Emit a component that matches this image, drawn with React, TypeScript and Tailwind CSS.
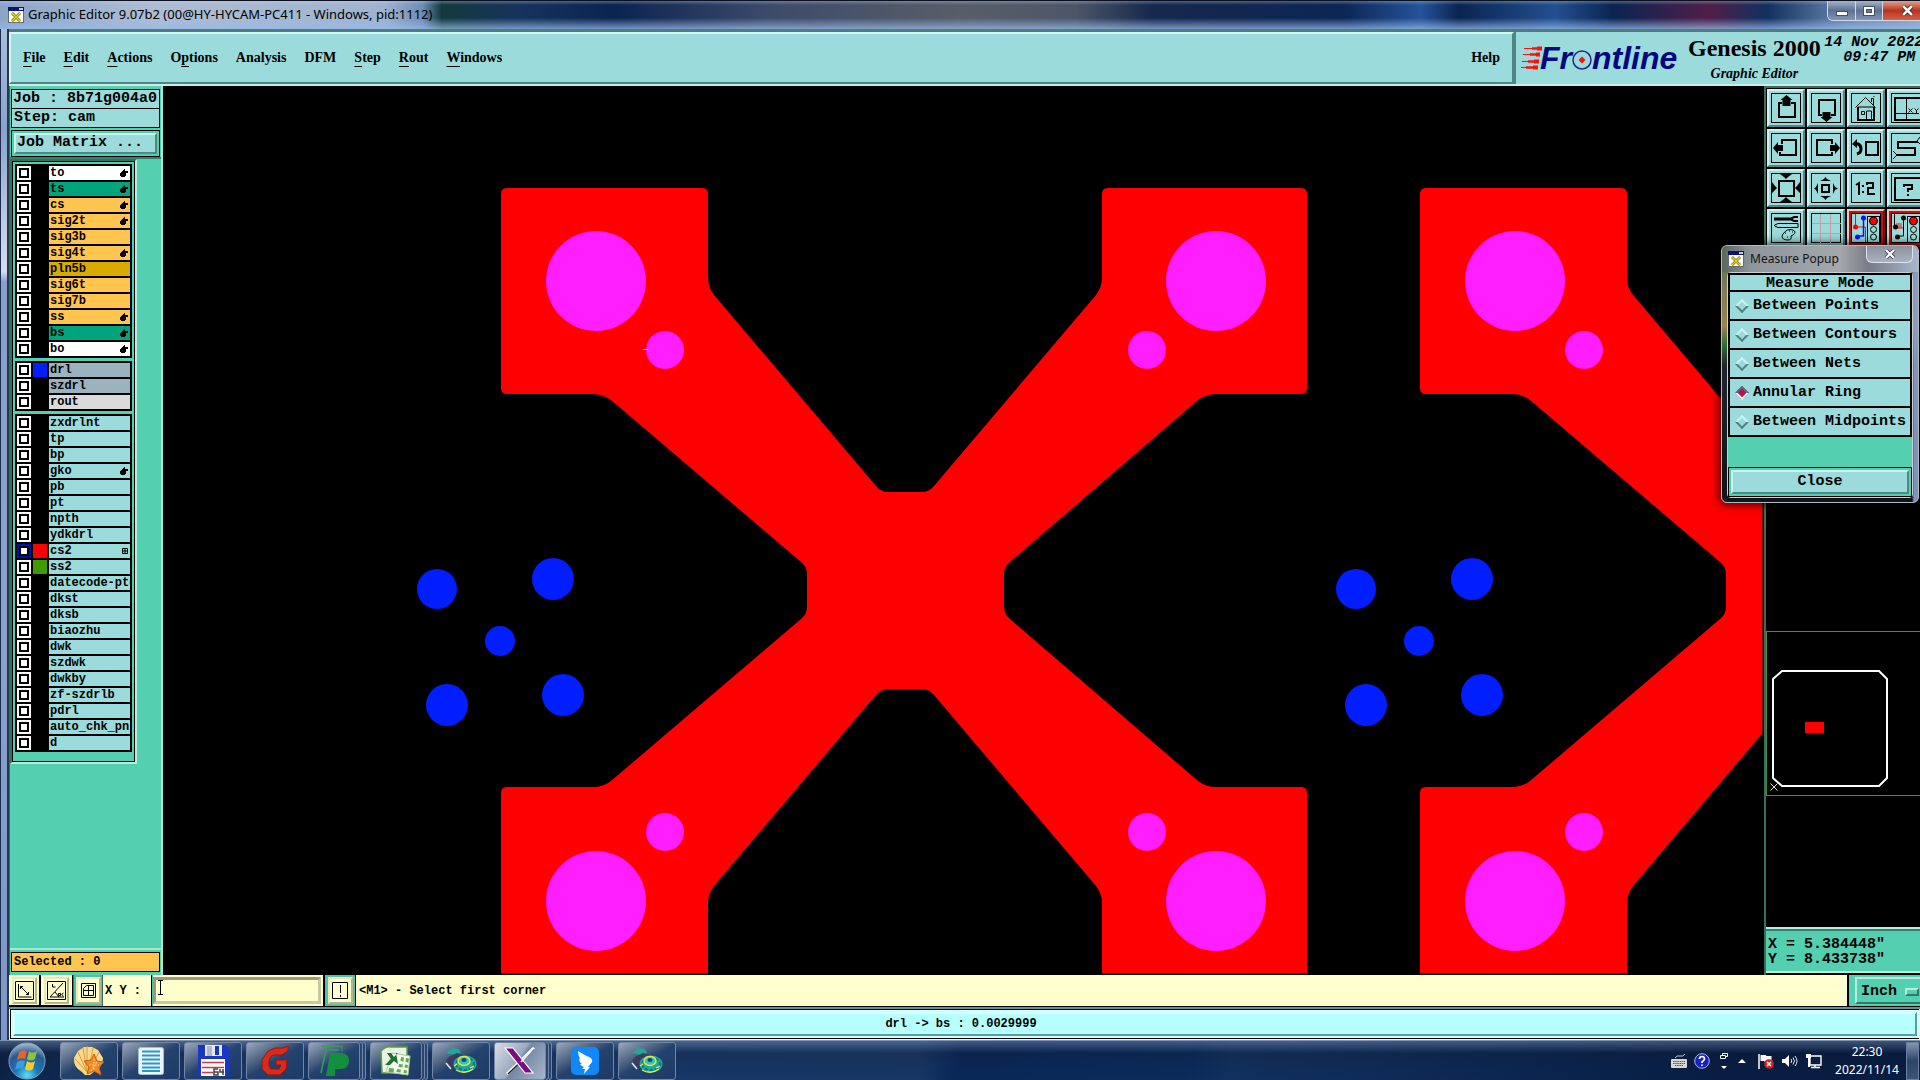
import React from "react";

const MONO = "font-['Liberation_Mono',monospace]";
const SERIF = "font-['Liberation_Serif',serif]";
const UI = "font-['Noto_Sans',sans-serif]";

/* ---------- Title bar ---------- */

function XLogo() {
  return (
    <svg viewBox="0 0 16 16" className="h-4 w-4 shrink-0" aria-hidden="true">
      <rect width="16" height="16" fill="#fff" />
      <rect x="0.5" y="0.5" width="15" height="15" fill="none" stroke="#6a6a70" />
      <rect width="16" height="4" fill="#10107a" />
      <rect x="11" y="1" width="4" height="2" fill="#c8c8c8" />
      <path d="M4 6l8 8M12 6l-8 8" stroke="#6b6410" strokeWidth="2.600" />
      <path d="M4 6l8 8M12 6l-8 8" stroke="#ddd21a" strokeWidth="1.600" />
    </svg>
  );
}

function TitleBar() {
  return (
    <header className="flex h-[29px] shrink-0 items-center overflow-hidden border-t border-[#0a1020] bg-[linear-gradient(to_bottom,rgba(190,210,235,0.35)_0,rgba(150,180,220,0)_4px,rgba(150,180,220,0)_17px,rgba(150,185,235,0.75)_28px),linear-gradient(to_right,#8ba4c6_0,#aebdd2_8%,#9fb3cf_20%,#6e8cb5_22%,#123a3e_23%,#17335c_27%,#0a2450_32%,#3d4a6a_40%,#585e68_50%,#4d5668_56%,#16284c_60%,#0c2656_70%,#25549a_74%,#0a2452_76%,#235090_81%,#0a2452_84%,#501f48_89%,#12305f_92%,#6683ad_96%,#8ba4c6_100%)] pl-2">
      <XLogo />
      <h1 className={`ml-1 whitespace-nowrap text-[13px] text-black ${UI}`}>
        Graphic Editor 9.07b2 (00@HY-HYCAM-PC411 - Windows, pid:1112)
      </h1>
      <div className="ml-auto flex h-5 w-[93px] self-start overflow-hidden rounded-bl-md border-b border-l border-[#d0d8e6]">
        <button aria-label="Minimize" className="flex w-7 shrink-0 items-center justify-center border-r border-[#d0d8e6] bg-gradient-to-b from-[#a5b3c9] via-[#5e7193] to-[#8196b6]">
          <svg viewBox="0 0 12 10" className="h-[10px] w-3"><rect x="0.5" y="5.5" width="11" height="4" fill="#fff" stroke="#44506a" /></svg>
        </button>
        <button aria-label="Maximize" className="flex w-[27px] shrink-0 items-center justify-center border-r border-[#d0d8e6] bg-gradient-to-b from-[#a5b3c9] via-[#5e7193] to-[#8196b6]">
          <svg viewBox="0 0 12 10" className="h-[10px] w-3"><rect x="0.5" y="0.5" width="11" height="9" fill="#fff" stroke="#44506a" /><rect x="3.5" y="3.5" width="5" height="3" fill="#6c7f9f" stroke="#44506a" /></svg>
        </button>
        <button aria-label="Close window" className="flex w-12 shrink-0 items-center justify-center bg-gradient-to-b from-[#e0a090] via-[#b8321c] to-[#d0604a]">
          <svg viewBox="0 0 12 10" className="h-[11px] w-[13px]"><path d="M2 1l8 8M10 1l-8 8" stroke="#54282a" strokeWidth="4" /><path d="M2 1l8 8M10 1l-8 8" stroke="#fff" strokeWidth="2.4" /></svg>
        </button>
      </div>
    </header>
  );
}

/* ---------- Menu bar ---------- */

const MENUS: [string, string, string][] = [
  ["", "F", "ile"],
  ["", "E", "dit"],
  ["", "A", "ctions"],
  ["O", "p", "tions"],
  ["Analysis", "", ""],
  ["DFM", "", ""],
  ["", "S", "tep"],
  ["", "R", "out"],
  ["", "W", "indows"],
];

function FrontlineLogo() {
  return (
    <div className="flex items-center font-['Liberation_Sans',sans-serif] text-[32px] font-bold italic leading-[34px] text-[#06067e]" aria-label="Frontline">
      <svg viewBox="0 0 24 26" className="-mr-1 h-[26px] w-6" aria-hidden="true">
        <g stroke="#ff1010">
          <path d="M4 3.500h12M3 9.500h10M2 16.500h10M1 22.500h10" strokeWidth="1" />
          <path d="M12 3.500h10M10 9.500h10M8 16.500h11M6 22.500h12" strokeWidth="2.500" />
          <path d="M17 3.500h5M16 9.500h4M14 16.500h5M13 22.500h5" strokeWidth="4" />
        </g>
      </svg>
      <span>Fr</span>
      <svg viewBox="0 0 20 20" className="mt-1 h-5 w-5" aria-hidden="true">
        <circle cx="10" cy="10" r="9" fill="none" stroke="#1c2c8c" strokeWidth="1.500" />
        <path d="M10 6.500l3.500 3.500-3.500 3.500L6.500 10z" fill="#ff1010" />
      </svg>
      <span>ntline</span>
    </div>
  );
}

function MenuBar() {
  return (
    <div className={`flex h-[57px] shrink-0 overflow-hidden border-b-2 border-t-[3px] border-b-[#c4efec] border-t-[#4e7d7d] bg-[#9bdbdb] font-bold text-black ${SERIF}`}>
      <nav className="flex flex-1 items-center gap-[18px] border-2 border-b-[#4e8585] border-l-[#d4f6f4] border-r-[#4e8585] border-t-[#d4f6f4] px-3 text-[14px] leading-5">
        {MENUS.map(([pre, key, post]) => (
          <button key={pre + key + post} className="whitespace-nowrap">
            {pre}
            {key && <span className="underline decoration-1 underline-offset-4">{key}</span>}
            {post}
          </button>
        ))}
        <button className="ml-auto">Help</button>
      </nav>
      <div className="flex w-[406px] shrink-0 items-center border-l-2 border-[#4e8585] pl-1">
        <FrontlineLogo />
        <div className="ml-2 flex w-[138px] shrink-0 flex-col items-center">
          <span className="whitespace-nowrap text-[24px] leading-7">Genesis 2000</span>
          <span className="mt-1 text-[14px] italic leading-4">Graphic Editor</span>
        </div>
        <div className={`flex w-[100px] shrink-0 flex-col items-end self-start pt-[3px] text-[15px] italic leading-[15px] ${MONO}`}>
          <span className="whitespace-nowrap">14 Nov 2022</span>
          <span className="mr-2">09:47 PM</span>
        </div>
      </div>
    </div>
  );
}

/* ---------- Layer list ---------- */

type Layer = { name: string; bg?: string; hand?: boolean; swatch?: string; active?: boolean };

const W = "bg-white";
const G = "bg-[#00a47d]";
const O = "bg-[#ffc54e]";
const D = "bg-[#9bb3be]";

const GROUPS: Layer[][] = [
  [
    { name: "to", bg: W, hand: true },
    { name: "ts", bg: G, hand: true },
    { name: "cs", bg: O, hand: true },
    { name: "sig2t", bg: O, hand: true },
    { name: "sig3b", bg: O },
    { name: "sig4t", bg: O, hand: true },
    { name: "pln5b", bg: "bg-[#d9ab00]" },
    { name: "sig6t", bg: O },
    { name: "sig7b", bg: O },
    { name: "ss", bg: O, hand: true },
    { name: "bs", bg: G, hand: true },
    { name: "bo", bg: W, hand: true },
  ],
  [
    { name: "drl", bg: D, swatch: "bg-[#001eff]" },
    { name: "szdrl", bg: D },
    { name: "rout", bg: "bg-[#dadada]" },
  ],
  [
    { name: "zxdrlnt" },
    { name: "tp" },
    { name: "bp" },
    { name: "gko", hand: true },
    { name: "pb" },
    { name: "pt" },
    { name: "npth" },
    { name: "ydkdrl" },
    { name: "cs2", swatch: "bg-[#ff0000]", active: true },
    { name: "ss2", swatch: "bg-[#409a00]" },
    { name: "datecode-pto" },
    { name: "dkst" },
    { name: "dksb" },
    { name: "biaozhu" },
    { name: "dwk" },
    { name: "szdwk" },
    { name: "dwkby" },
    { name: "zf-szdrlb" },
    { name: "pdrl" },
    { name: "auto_chk_pnl" },
    { name: "d" },
  ],
];

function LayerRow({ layer }: { layer: Layer }) {
  const box = layer.active
    ? "bg-white shadow-[inset_0_0_0_2px_#0010b0,inset_0_0_0_4px_#000]"
    : "bg-white shadow-[inset_0_0_0_2px_#fff,inset_0_0_0_4px_#000]";
  return (
    <label className="flex h-[14px] gap-[2px]">
      <input type="checkbox" defaultChecked={layer.active} className={`h-[14px] w-[14px] shrink-0 appearance-none ${box}`} />
      <span className={`w-[14px] shrink-0 ${layer.swatch ?? "bg-black"}`} />
      <span className={`flex w-[81px] items-center justify-between overflow-hidden pl-[1px] pr-[2px] ${layer.bg ?? "bg-[#9bdbdb]"}`}>
        <span className="whitespace-nowrap text-[12px] font-bold leading-[14px]">{layer.name}</span>
        {layer.hand && (
          <svg viewBox="0 0 8 8" className="h-2 w-2 shrink-0" aria-hidden="true">
            <path d="M4 0h1v2h3v2H6v1H6v2H5v1H1V7H0V4h1V3h1V2h1V1h1z" />
          </svg>
        )}
        {layer.active && (
          <svg viewBox="0 0 6 6" className="h-[6px] w-[6px] shrink-0" aria-hidden="true">
            <path d="M.5 .5h5v5h-5zM3 0v6M0 3h6" fill="none" stroke="#000" />
          </svg>
        )}
      </span>
    </label>
  );
}

function LeftPanel() {
  return (
    <aside className={`flex w-[154px] shrink-0 flex-col border-l border-r-2 border-l-[#35705f] border-r-[#a5e8d6] bg-[#54cfaf] text-black ${MONO}`}>
      <div className="border-b-2 border-[#35806c] px-[1px] pt-[3px] text-[15px] font-bold">
        <div className="flex h-5 items-center whitespace-nowrap border border-black bg-[#9bdbdb] pl-[1px]">Job : 8b71g004a0</div>
        <div className="flex h-[19px] items-center whitespace-nowrap border border-t-0 border-black bg-[#9bdbdb] pl-[2px] pt-[1px]">Step: cam</div>
        <div className="mt-[2px] border border-black p-[2px]">
          <button className="flex h-[21px] w-full items-center whitespace-nowrap border-2 border-b-[#4f8888] border-l-[#cdf3f1] border-r-[#4f8888] border-t-[#cdf3f1] bg-[#9bdbdb] pl-[1px]">Job Matrix ...</button>
        </div>
      </div>
      <div className="w-[127px] border-b-2 border-l-2 border-r-2 border-t-2 border-b-[#b5eede] border-l-[#35705f] border-r-[#b5eede] border-t-[#35705f]">
        <div className="flex flex-col gap-[3px] border border-black px-[2px] pb-[9px] pt-[2px]">
          {GROUPS.map((g, i) => (
            <div key={i} className="flex w-[117px] flex-col gap-[2px] bg-black p-[2px]">
              {g.map((l) => (
                <LayerRow key={l.name} layer={l} />
              ))}
            </div>
          ))}
        </div>
      </div>
      <div className="mt-auto border-t-2 border-[#a5e8d6] px-[1px] pb-[3px] pt-[2px]">
        <div className="flex h-5 items-center border border-black bg-[#ffc54e] pl-[2px] text-[12px] font-bold">Selected : 0</div>
      </div>
    </aside>
  );
}

/* ---------- Board drawing ---------- */

const ARM =
  "M507 188H702Q708 188 708 194V278Q708 287 714 295L876 486Q881 492 888 492H922Q929 492 934 486L1096 295Q1102 287 1102 278V194Q1102 188 1108 188H1301Q1307 188 1307 194V388Q1307 394 1301 394H1216Q1206 394 1198 400L1010 562Q1004 567 1004 574V607Q1004 614 1010 619L1198 781Q1206 787 1216 787H1301Q1307 787 1307 793V1000H1102V903Q1102 894 1096 886L934 695Q929 689 922 689H888Q881 689 876 695L714 886Q708 894 708 903V1000H501V793Q501 787 507 787H593Q603 787 611 781L801 619Q807 614 807 607V574Q807 567 801 562L611 400Q603 394 593 394H507Q501 394 501 388V194Q501 188 507 188Z";

function BoardUnit({ dx }: { dx: number }) {
  return (
    <g transform={`translate(${dx} 0)`}>
      <path d={ARM} fill="#ff0000" />
      <g fill="#ff1eff">
        {[281, 901].map((y) => (
          <g key={y}>
            <circle cx="596" cy={y} r="50" />
            <circle cx="1216" cy={y} r="50" />
          </g>
        ))}
        {[350, 832].map((y) => (
          <g key={y}>
            <circle cx="665" cy={y} r="19" />
            <circle cx="1147" cy={y} r="19" />
          </g>
        ))}
      </g>
      <g fill="#001eff">
        <circle cx="437" cy="589" r="20" />
        <circle cx="553" cy="579" r="21" />
        <circle cx="500" cy="641" r="15" />
        <circle cx="447" cy="705" r="21" />
        <circle cx="563" cy="695" r="21" />
      </g>
    </g>
  );
}

function Board() {
  return (
    <main className="min-w-0 flex-1 overflow-hidden bg-black">
      <svg viewBox="163 86 1601 889" preserveAspectRatio="xMinYMin slice" className="h-full w-full" role="img" aria-label="Board layers">
        <BoardUnit dx={0} />
        <BoardUnit dx={919} />
        <path d="M643 349.500h5" stroke="#b0e8b0" />
        <path d="M163 974.500h1601M1763.500 86v889" stroke="#000" strokeWidth="2" />
      </svg>
    </main>
  );
}

/* ---------- Right tool palette ---------- */

const S2 = { fill: "none", stroke: "#000", strokeWidth: 2 } as const;
const S1 = { fill: "none", stroke: "#000", strokeWidth: 1 } as const;

const TOOLS: { label: string; red?: boolean; art: React.ReactNode }[] = [
  { label: "Pan up", art: <><path d="M15 14h-3v14h16V14h-4" {...S2} /><path d="M19.500 6l6 5h-2v6h-8v-6h-2z" /></> },
  { label: "Pan down", art: <><path d="M15 26h-3V11h16v15h-4" {...S2} /><path d="M19.500 33l6-5h-2v-5h-8v5h-2z" /></> },
  {
    label: "Home",
    art: <><path d="M8.500 18.500l10-10 10 10M11 18h17M24.500 13V9.500h2V16M26.500 8l1-1M14.500 22.500h3v3h-3zM19.500 31v-9h5v9" {...S1} /><path d="M11 18v13h16V18" {...S2} /></>,
  },
  {
    label: "Coordinates view",
    art: <><path d="M33 9H8v22h25" {...S2} /><path d="M19.500 9v22M8 24.500h24M21.500 19.500l4 4M25.500 19.500l-4 4M27.500 19.500l2 2 2-2M29.500 21v3" {...S1} /></>,
  },
  { label: "Pan left", art: <><path d="M15 15v-4h14v15H13v-3" {...S2} /><path d="M6 19l5-6v3h5v6h-5v3z" /></> },
  { label: "Pan right", art: <><path d="M25 15v-4H10v15h15v-3" {...S2} /><path d="M33 19l-5-6v3h-5v6h5v3z" /></> },
  { label: "Previous view", art: <><path d="M19 13h12v13H19z" {...S2} /><path d="M8 15h3q3 1 3 5t-4 5" fill="none" stroke="#000" strokeWidth="3" /><path d="M5 15l5-5v9z" /></> },
  { label: "Serpentine", art: <><path d="M31 13H11v6h17v7H9" {...S2} /><path d="M30 12l3-4M31 13l3 3M9 25l-3-3M9 27l-3 3" {...S1} /></> },
  { label: "Zoom in", art: <><path d="M12 12h15v15H12z" {...S2} /><path d="M13 5h12l-4 3-2 2-2-2zM13 33h12l-4-3-2-2-2 2zM5 13v11l3-3 2-2-2-2zM33 13v11l-3-3-2-2 2-2z" /></> },
  { label: "Zoom out", art: <><path d="M15 16h7v7h-7z" {...S2} /><path d="M13 12h11l-4-2-1.500-2-1.500 2zM13 27h11l-4 2-1.500 2-1.500-2zM11 14v11l-2-4-2-1.500 2-1.500zM26 14v11l2-4 3-1.500-3-1.500z" /></> },
  {
    label: "Zoom by factor",
    art: <><path d="M9 16l3-2v12M20 16v-2h6v5h-5v6h7" {...S2} /><path d="M15 16h2v2h-2zM15 22h2v2h-2z" /></>,
  },
  { label: "Query", art: <><path d="M33 9H8v22h25" {...S2} /><path d="M17 18v-2h8v4h-4v3M21 25v2" {...S2} /></> },
  {
    label: "Tools",
    art: (
      <>
        <path d="M7 10h19" stroke="#000" strokeWidth="3" /><path d="M31 8h-4l-2 1v2l2 1h4" {...S2} />
        <path d="M7 16.500l4-2h20v4H11z" {...S1} />
        <path d="M16 25q4-6 10-4 4 2 0 5l-2 1q1 4-3 4-6 0-6-4zM18 24h1M22 22h1M20 28h1M25 23h1" {...S1} />
      </>
    ),
  },
  { label: "Grid", art: <path d="M13.500 5v29M23.500 5v29M5 14.500h29M5 24.500h29" fill="none" stroke="#c89ca6" /> },
  {
    label: "Net control",
    red: true,
    art: (
      <>
        <path d="M8.500 5v13h10v15" stroke="#f01010" fill="none" /><path d="M16.500 8v19h-6" stroke="#0010ff" fill="none" strokeWidth="1.500" />
        <circle cx="8.500" cy="18" r="2.500" fill="#f00" /><circle cx="16.500" cy="9" r="2.500" fill="#0010ff" /><circle cx="10.500" cy="28" r="2.500" fill="#0010ff" />
        <rect x="20.500" y="7.500" width="12" height="26" {...S1} /><circle cx="26.500" cy="12" r="4" fill="#f00" stroke="#000" /><circle cx="26.500" cy="20.500" r="3" {...S1} /><circle cx="26.500" cy="28" r="3" {...S1} />
      </>
    ),
  },
  {
    label: "Short control",
    red: true,
    art: (
      <>
        <path d="M7.500 5v13M16.500 8v19h-6" {...S1} /><path d="M10 14v5h6M12 14v5M14 14v5" stroke="#f01010" fill="none" />
        <circle cx="8.500" cy="18" r="2.500" /><circle cx="16.500" cy="9" r="2.500" /><circle cx="10.500" cy="28" r="2.500" />
        <rect x="20.500" y="7.500" width="12" height="26" {...S1} /><circle cx="26.500" cy="12" r="4" fill="#f00" stroke="#000" /><circle cx="26.500" cy="20.500" r="3" {...S1} /><circle cx="26.500" cy="28" r="3" {...S1} />
      </>
    ),
  },
];

function RightPanel() {
  return (
    <aside className="flex w-[156px] shrink-0 flex-col overflow-hidden border-l-2 border-t-2 border-[#35705f] bg-black">
      <div className="grid grid-cols-[repeat(4,38px)] gap-[2px] pl-[1px] pt-[1px]">
        {TOOLS.map((t) => (
          <button
            key={t.label}
            aria-label={t.label}
            className={`h-[38px] w-[38px] border-2 bg-[#9bdbdb] ${t.red ? "border-b-[#7c1010] border-l-[#e8c8c8] border-r-[#7c1010] border-t-[#e8c8c8] shadow-[inset_0_0_0_2px_#b01818]" : "border-b-[#4f8888] border-l-[#cdf3f1] border-r-[#4f8888] border-t-[#cdf3f1]"}`}
          >
            <svg viewBox="2 2 34 34" className="h-full w-full" aria-hidden="true">
              <rect x="4.500" y="4.500" width="29" height="29" {...S1} />
              {t.art}
            </svg>
          </button>
        ))}
      </div>
      <div className="mt-auto h-[165px] border border-r-0 border-[#4a8a38]">
        <svg viewBox="0 0 153 163" className="h-[163px] w-[153px]" role="img" aria-label="Overview">
          <path d="M15 39h97l8 8v99l-8 8H15l-9-8V47z" fill="none" stroke="#fff" strokeWidth="2" />
          <rect x="38" y="90" width="19" height="11" fill="#f00" />
          <path d="M3.500 151.500l7 7M10.500 151.500l-7 7" stroke="#ddd" />
        </svg>
      </div>
      <div className={`mt-[131px] flex h-[46px] shrink-0 flex-col justify-center whitespace-nowrap border-y-2 border-[#b5eede] bg-[#54cfaf] pl-[2px] pt-[3px] text-[15px] font-bold leading-[15px] text-black shadow-[inset_0_2px_0_#35806c] ${MONO}`}>
        <span>X = 5.384448&quot;</span>
        <span>Y = 8.433738&quot;</span>
      </div>
      <div className="h-[2px] shrink-0 bg-black" />
    </aside>
  );
}

/* ---------- Measure popup ---------- */

const MODES = ["Between Points", "Between Contours", "Between Nets", "Annular Ring", "Between Midpoints"];

function MeasurePopup() {
  return (
    <section
      aria-label="Measure Popup"
      className="absolute right-[1px] top-[245px] w-[198px] rounded-md border border-[#b0b8c0] bg-[linear-gradient(to_right,transparent_0,transparent_190px,rgba(140,160,200,0.9)_192px),linear-gradient(to_bottom,#4a7040_0,#7d7a5a_40px,#9a8550_80px,#2f6a35_100px,#20242c_120px,#10141a_100%)] px-[5px] pb-[4px] shadow-[0_0_8px_2px_rgba(0,0,0,0.7)]"
    >
      <div className="-mx-[5px] flex h-[26px] items-center rounded-t-md bg-[linear-gradient(to_right,#58685c_0,#8e969c_15%,#a4a8ac_60%,#777c86_75%,#a9b6cc_100%)] pl-[6px]">
        <XLogo />
        <h2 className={`ml-[6px] text-[12px] text-[#151515] ${UI}`}>Measure Popup</h2>
        <button aria-label="Close popup" className="ml-auto mr-[5px] flex h-[17px] w-[47px] items-center justify-center self-start rounded-b-md border border-t-0 border-[#dde3ec] bg-gradient-to-b from-[#8a929c] to-[#a9b2c2]">
          <svg viewBox="0 0 12 10" className="h-[10px] w-3"><path d="M2 1l8 8M10 1l-8 8" stroke="#444c58" strokeWidth="4" /><path d="M2 1l8 8M10 1l-8 8" stroke="#fff" strokeWidth="2.200" /></svg>
        </button>
      </div>
      <div className={`rounded-sm border border-[#c8d0d8] bg-[#54cfaf] text-[15px] font-bold text-black ${MONO}`}>
        <fieldset className="border-2 border-black">
          <div className="h-[15px] bg-[#9bdbdb] text-center leading-[17px]">Measure Mode</div>
          {MODES.map((m) => (
            <label key={m} className="flex h-[29px] items-center whitespace-nowrap border-t-2 border-black bg-[#9bdbdb] pl-1 leading-5">
              <input
                type="radio"
                name="measure-mode"
                defaultChecked={m === "Annular Ring"}
                className="mx-[3px] mr-[6px] h-[10px] w-[10px] shrink-0 rotate-45 appearance-none border-2 border-b-[#4f8080] border-l-[#cdf3f1] border-r-[#4f8080] border-t-[#cdf3f1] checked:border-b-[#e8f8f8] checked:border-l-[#4f7080] checked:border-r-[#e8f8f8] checked:border-t-[#4f7080] checked:bg-[#c0104f]"
              />
              {m}
            </label>
          ))}
        </fieldset>
        <div className="mt-[30px] border border-black p-[2px]">
          <button className="h-6 w-full border-2 border-b-[#4f8888] border-l-[#cdf3f1] border-r-[#4f8888] border-t-[#cdf3f1] bg-[#9bdbdb] leading-5">Close</button>
        </div>
      </div>
    </section>
  );
}

/* ---------- Command bar ---------- */

const CREAM_BEVEL = "border-2 border-b-[#b5b58c] border-l-[#e9e9c0] border-r-[#b5b58c] border-t-[#e9e9c0] bg-[#ffffce]";

function CmdIcon({ label, children }: { label: string; children: React.ReactNode }) {
  return (
    <button aria-label={label} className={`h-[27px] w-[25px] ${CREAM_BEVEL}`}>
      <svg viewBox="0 0 21 23" className="h-full w-full" aria-hidden="true">
        {children}
      </svg>
    </button>
  );
}

function CommandBar() {
  return (
    <div className={`flex h-8 shrink-0 border-b border-black bg-[#ffffce] text-[12px] font-bold text-black ${MONO}`}>
      <div className="flex w-8 items-center justify-center border-b border-r-2 border-black">
        <CmdIcon label="Snap">
          <path d="M1.500 2.500h18v18h-18z" {...S1} /><path d="M4.500 5v13h13M6.500 7.500l8 8M6.500 10V7.500H9M12 15.500h2.500V13" {...S1} />
        </CmdIcon>
      </div>
      <div className="flex w-8 items-center justify-center border-b border-r border-black">
        <CmdIcon label="Angle">
          <path d="M1.500 2.500h18v18h-18z" {...S1} /><path d="M17 4L4 18h14M6.500 5v3h3M9 13l4 5M12.500 14.500h2v2h-2zM17.500 14l-2 1.500 2 1.500" {...S1} />
        </CmdIcon>
      </div>
      <div className="flex w-[30px] items-center justify-center border-x border-[#35705f] bg-[#54c0a5]">
        <CmdIcon label="Grid snap">
          <path d="M3.500 4.500h14v14h-14z" {...S1} /><path d="M5.500 16.500v-7l3-3h7v10zM10.500 6.500v10M5.500 11.500h10" {...S1} />
        </CmdIcon>
      </div>
      <label htmlFor="xy" className="flex w-12 items-center whitespace-pre pl-[2px] pt-[1px]">X Y :</label>
      <div className="relative w-[173px] border-x border-black py-[2px] pl-[1px] pr-[2px] shadow-[inset_1px_0_0_#54c0a5]">
        <input id="xy" defaultValue="" className="h-full w-full border-[3px] border-b-[#c9c9a0] border-l-[#9a9a78] border-r-[#c9c9a0] border-t-[#9a9a78] bg-[#ffffce] px-1 outline-none" />
        <svg viewBox="0 0 5 15" className="pointer-events-none absolute left-[6px] top-[5px] h-[15px] w-[5px]" aria-hidden="true">
          <path d="M0 .5h5M0 14.500h5M2.500 0v15" stroke="#000" />
        </svg>
      </div>
      <div className="flex w-8 items-center justify-center border-x border-black bg-[#54c0a5]">
        <CmdIcon label="Interrupt">
          <path d="M2.500 3.500h15v16h-15z" {...S1} /><path d="M10.500 6v8M10.500 16v2" {...S1} />
        </CmdIcon>
      </div>
      <output className="flex flex-1 items-center pl-[3px] pt-[1px]">&lt;M1&gt; - Select first corner</output>
      <div className="w-[73px] shrink-0 overflow-hidden border-l-2 border-black bg-[#54cfaf] p-[2px] pl-[6px]">
        <div className="flex h-[27px] w-[80px] items-center border-2 border-b-[#2f7c66] border-l-[#b5eede] border-r-[#2f7c66] border-t-[#b5eede] pl-[4px] pt-[2px]">
          <select aria-label="Units" className="w-[44px] appearance-none bg-transparent text-[15px] font-bold leading-5 outline-none">
            <option>Inch</option>
          </select>
          <span className="h-2 w-[14px] border-2 border-b-[#2f7c66] border-l-[#b5eede] border-r-[#2f7c66] border-t-[#b5eede]" />
        </div>
      </div>
    </div>
  );
}

/* ---------- Taskbar ---------- */

function Bug() {
  return (
    <svg viewBox="0 0 32 26" className="h-[26px] w-8" aria-hidden="true">
      <path d="M1 5l6-5 7 1 2 4-6 2z" fill="#1fa89a" /><path d="M2 17q-2-8 6-10l4-2 8 3-8 12z" fill="#3d3a60" /><path d="M1 15l5 6" stroke="#e8e8f0" strokeWidth="1.500" />
      <ellipse cx="20" cy="16" rx="11.500" ry="8.500" fill="#1da89b" /><ellipse cx="20" cy="16" rx="9" ry="6" fill="none" stroke="#0b7a70" strokeDasharray="3 2" strokeWidth="2" />
      <ellipse cx="19" cy="13" rx="6" ry="4.500" fill="#36c4b0" stroke="#e8e048" strokeWidth="1.500" /><ellipse cx="19" cy="12" rx="2.500" ry="2" fill="#154a70" />
      <path d="M11 22q9 5 17-1M12 16l-3 2M25 20l4-2" fill="none" stroke="#f0ea50" strokeWidth="1.300" />
    </svg>
  );
}

const APPS: { label: string; stacked?: boolean; active?: boolean; art: React.ReactNode }[] = [
  {
    label: "Shell viewer",
    art: (
      <svg viewBox="0 0 32 32" className="h-8 w-8" aria-hidden="true">
        <path d="M9 27Q0 22 1 13L5 6l6-4h8l6 3 5 8q0 9-8 13l-5 4h-5z" fill="#fbd98c" />
        <path d="M14 27L2 14M14 27L5 7M14 27L10 3M14 27V1M15 27L20 3M16 27L26 7" stroke="#d99a40" strokeWidth="1" />
        <path d="M21 9l3 7 7 1-5 5 2 8-7-4-7 3 2-7-5-6 7-1z" fill="#f08a24" stroke="#c8600c" />
        <path d="M21 14v11M16 20h10M18 26l6-9" stroke="#fcd090" strokeWidth="1.200" strokeDasharray="1.500 1.500" />
      </svg>
    ),
  },
  {
    label: "Notes",
    art: (
      <svg viewBox="0 0 26 28" className="h-7 w-[26px]" aria-hidden="true">
        <rect x="0.500" y="0.500" width="25" height="27" rx="2" fill="#eaf6fc" stroke="#9dc0d4" />
        <path d="M4 4.500h18M4 8.500h18M4 12.500h18M4 16.500h18M4 20.500h18M4 24h18" stroke="#2f95c6" strokeWidth="2" />
      </svg>
    ),
  },
  {
    label: "Disk 64",
    art: (
      <svg viewBox="0 0 32 32" className="h-8 w-8" aria-hidden="true">
        <path d="M1 0h28l3 3v28H1z" fill="#1838c4" /><rect x="8" y="0" width="17" height="11" fill="#e6e8ee" /><rect x="18" y="1" width="4" height="9" fill="#1838c4" /><rect x="10" y="1" width="5" height="10" fill="#b4b8c4" />
        <rect x="4" y="14" width="24" height="17" fill="#fff" /><path d="M5 17.500h22M5 22.500h22M5 27.500h11" stroke="#c83a48" strokeWidth="1.300" />
        <path d="M21 24h-4v6h4v-3h-4M23 24v3h4M26 24v6" fill="none" stroke="#404048" strokeWidth="1.500" />
      </svg>
    ),
  },
  {
    label: "G tool",
    art: (
      <svg viewBox="0 0 30 30" className="h-[30px] w-[30px]" aria-hidden="true">
        <path d="M28 0q1 6-4 7l-2 2h-7q-5 0-6 6-1 5 2 8h8l2-4h-5v-5h11l-1 9-6 6H8l-6-6v-9l6-9 7-3h8z" fill="#d82b1c" stroke="#a01408" />
      </svg>
    ),
  },
  {
    label: "P tool",
    stacked: true,
    art: (
      <svg viewBox="0 0 32 32" className="h-8 w-8" aria-hidden="true">
        <path d="M12 8h12q7 1 7 8t-8 8h-6v7H8z" fill="#12903f" /><path d="M3 28L8 5h13" fill="none" stroke="#2ba35a" strokeWidth="1.500" /><path d="M4 1.500h20v5" fill="none" stroke="#3a9868" />
      </svg>
    ),
  },
  {
    label: "Spreadsheet",
    stacked: true,
    art: (
      <svg viewBox="0 0 32 30" className="h-[30px] w-8" aria-hidden="true">
        <path d="M1 5q5-5 10-4h16v26H2z" fill="#e8f3e0" stroke="#56a040" strokeWidth="1.500" /><path d="M12 7l18 3-2 19-22-3z" fill="#f4f8f0" stroke="#a8c898" />
        <path d="M21 11l3 .5-.5 4-3-.4zM26 12l3 .5-.5 4-3-.4zM19 18l4 .5-.5 3-4-.4zM25 18.500l3 .5-.5 3-3-.4zM9 22l5 .6-.5 4-5-.6zM17 23l4 .6-.5 3-4-.6zM24 24l3 .6-.5 3-3-.6z" fill="#5fae48" />
        <path d="M7 7h4l3 4 4-4h-2l2 11-4-3-4 4H5l6-6z" fill="#206e2c" />
      </svg>
    ),
  },
  { label: "Genesis", art: <Bug /> },
  {
    label: "X server",
    stacked: true,
    active: true,
    art: (
      <svg viewBox="0 0 32 28" className="h-7 w-8" aria-hidden="true">
        <path d="M30 1L3 27" stroke="#fff" strokeWidth="3" /><path d="M30 2L4 27" stroke="#222" strokeWidth="1.500" />
        <path d="M1 1h8l20 25h-8z" fill="#7c0c84" stroke="#fff" strokeWidth="1.200" /><path d="M17 15L30 1" stroke="#fff" strokeWidth="1.500" />
      </svg>
    ),
  },
  {
    label: "Wing messenger",
    art: (
      <svg viewBox="0 0 28 28" className="h-7 w-7" aria-hidden="true">
        <rect width="28" height="28" rx="5" fill="#1088fa" />
        <path d="M7 4q6 4 11 6 4 2 3 5l-4 5h2l-6 7 1-5h-3l2-2q-3-1-4-3h2q-3-2-3-5h1Q7 8 7 4z" fill="#fff" />
      </svg>
    ),
  },
  { label: "Genesis toolkit", art: <Bug /> },
];

function Taskbar() {
  return (
    <footer className={`flex h-10 shrink-0 items-center border-t border-[#7d93b4] bg-[linear-gradient(to_bottom,rgba(130,155,190,0.45)_0,rgba(20,30,60,0.3)_12px,rgba(20,50,100,0.1)_100%),linear-gradient(100deg,#0b2042_0,#1a3a6c_12%,#173866_48%,#082656_50%,#0a2a5a_62%,#12315f_64%,#0a2650_78%,#061b3e_90%)] ${UI}`}>
      <button aria-label="Start" className="ml-2 mr-[14px] shrink-0">
        <svg viewBox="0 0 38 38" className="h-[38px] w-[38px]" aria-hidden="true">
          <defs>
            <radialGradient id="orb" cx="0.500" cy="0.900" r="0.900"><stop offset="0" stopColor="#58e0ff" /><stop offset="0.350" stopColor="#1a78b4" /><stop offset="0.700" stopColor="#2b5a8c" /><stop offset="1" stopColor="#a8c0d8" /></radialGradient>
          </defs>
          <circle cx="19" cy="19" r="18" fill="url(#orb)" stroke="#7fa4c4" />
          <path d="M11 10q4-3 8-1l-2 8q-4-2-8 1z" fill="#e8622a" /><path d="M21 9q4 3 8 0l-2 8q-4 3-8 0z" fill="#8cc43c" />
          <path d="M9 20q4-3 8-1l-2 8q-4-2-8 1z" fill="#3f9ae0" /><path d="M19 19q4 3 8 0l-2 8q-4 3-8 0z" fill="#fcc82c" />
        </svg>
      </button>
      <nav className="flex h-[38px] gap-1" aria-label="Running programs">
        {APPS.map((a) => (
          <div key={a.label} className="flex w-[58px]">
            <button
              aria-label={a.label}
              className={`flex min-w-0 flex-1 items-center justify-center rounded-[3px] border border-[#7387a4] ${a.active ? "bg-[linear-gradient(125deg,#d8dfe8_0,#9aa9bf_45%,#7488a6_50%,#a8b6ca_100%)]" : "bg-[linear-gradient(150deg,#9aa8bd_0,#4a607f_35%,#24426e_50%,#1e3b68_100%)]"}`}
            >
              {a.art}
            </button>
            {a.stacked && (
              <>
                <span className="w-[3px] rounded-r-[3px] border-y border-r border-[#7387a4] bg-[#2a4670]" />
                <span className="w-[3px] rounded-r-[3px] border-y border-r border-[#7387a4] bg-[#2a4670]" />
              </>
            )}
          </div>
        ))}
      </nav>
      <div className="ml-auto flex items-center text-white">
        <svg viewBox="0 0 16 14" className="mr-[7px] h-[14px] w-4" aria-hidden="true"><rect x="0" y="5" width="16" height="9" rx="1" fill="#d8d8d4" /><path d="M2 7.500h12M2 9.500h12M4 11.500h8" stroke="#555" strokeDasharray="1.500 0.700" /><path d="M4 4q2-3 5-2t5-2" fill="none" stroke="#ccc" /></svg>
        <svg viewBox="0 0 16 16" className="mr-[10px] h-4 w-4" aria-hidden="true"><circle cx="8" cy="8" r="7.300" fill="#1822c0" stroke="#a8b4e8" /><path d="M5.500 6q0-2.500 2.500-2.500T10.500 6Q10.500 7 8 9v1M8 11.500v1.500" fill="none" stroke="#fff" strokeWidth="1.700" /></svg>
        <svg viewBox="0 0 8 18" className="mr-[10px] h-[18px] w-2" aria-hidden="true"><path d="M2.500 3V1.500h5v3H6M.5 3.500h5v3h-5z" fill="none" stroke="#fff" /><path d="M1 14h6l-3 3z" fill="#fff" /></svg>
        <svg viewBox="0 0 8 4" className="mr-3 h-1 w-2" aria-hidden="true"><path d="M0 4l4-4 4 4z" fill="#fff" /></svg>
        <svg viewBox="0 0 16 16" className="mr-2 h-4 w-4" aria-hidden="true"><path d="M1 1v15" stroke="#fff" strokeWidth="1.500" /><path d="M2.500 2h5l1 1h5v6H7L6 8H2.500z" fill="#fff" /><circle cx="11" cy="11" r="4.800" fill="#d42020" /><path d="M9 9l4 4M13 9l-4 4" stroke="#fff" strokeWidth="1.500" /></svg>
        <svg viewBox="0 0 16 14" className="mr-2 h-[14px] w-4" aria-hidden="true"><path d="M0 5h3l4-4v12L3 9H0z" fill="#fff" /><path d="M9 5q1.500 2 0 4M11 3.500q3 3.500 0 7M13 2q4 5 0 10" fill="none" stroke="#dde4ee" /></svg>
        <svg viewBox="0 0 16 16" className="mr-[10px] h-4 w-4" aria-hidden="true"><path d="M4 3h11v9H4zM9 12v2M5 14.500h9" fill="none" stroke="#fff" strokeWidth="1.400" /><path d="M0 1h5v4H4v9H2V5H0z" fill="#fff" /></svg>
        <time className="flex w-[70px] flex-col items-center text-[12px] leading-[18px]">
          <span>22:30</span>
          <span>2022/11/14</span>
        </time>
      </div>
      <button aria-label="Show desktop" className="ml-1 mr-[1px] h-[38px] w-[13px] border border-[#6a7f9e] bg-gradient-to-b from-[#8796ae] via-[#2c4468] to-[#3c5478]" />
    </footer>
  );
}

export default function App() {
  return (
    <div className="relative flex h-screen w-full flex-col overflow-hidden bg-black">
      <TitleBar />
      <div className="flex min-h-0 flex-1">
        <div className="w-[9px] shrink-0 border-l border-r-2 border-l-[#1c2c4c] border-r-[#26384e] bg-[linear-gradient(to_bottom,#a9bddb_0,#8ba2cc_10%,#c4cfe4_20%,#d5dced_24%,#88a0cc_25%,#8ba2ce_60%,#7c96c8_100%)]" />
        <div className="flex min-w-0 flex-1 flex-col">
          <MenuBar />
          <div className="flex min-h-0 flex-1">
            <LeftPanel />
            <Board />
            <RightPanel />
          </div>
          <CommandBar />
          <div className="h-[33px] shrink-0 border-t-2 border-[#6e8f8f] bg-[#cfffff] px-[1px] pb-[1px]">
            <div className="h-full border border-r-0 border-black p-[2px]">
              <output className={`flex h-full items-center justify-center border-2 border-b-[#5f9c9c] border-l-[#d8ffff] border-r-[#5f9c9c] border-t-[#d8ffff] bg-[#b5ffff] pr-2 text-[12px] font-bold text-black ${MONO}`}>
                drl -&gt; bs : 0.0029999
              </output>
            </div>
          </div>
        </div>
      </div>
      <Taskbar />
      <MeasurePopup />
    </div>
  );
}
